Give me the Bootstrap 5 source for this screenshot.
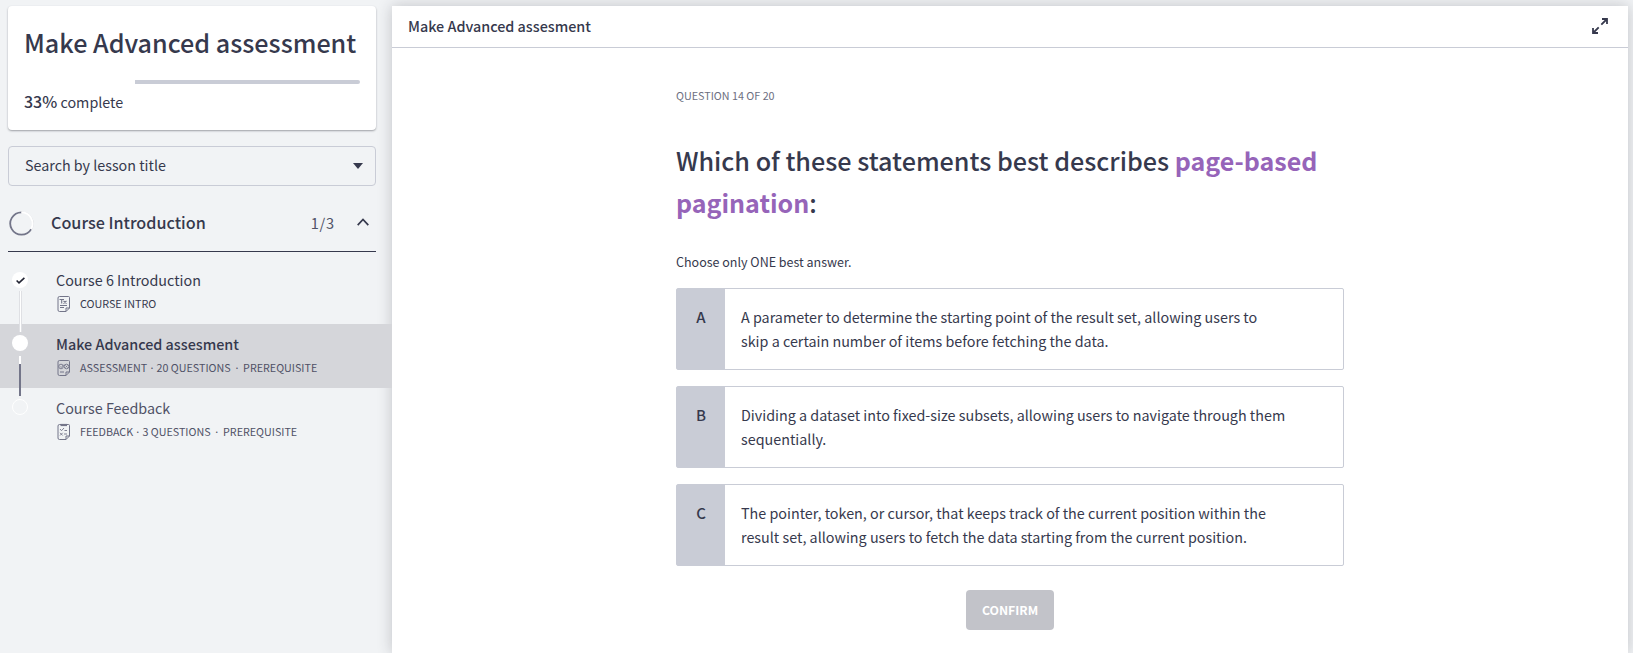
<!DOCTYPE html>
<html lang="en">
<head>
<meta charset="utf-8">
<meta name="viewport" content="width=device-width, initial-scale=1">
<title>Make Advanced assessment</title>
<link href="https://cdn.jsdelivr.net/npm/bootstrap@5.3.0/dist/css/bootstrap.min.css" rel="stylesheet">
<script src="https://cdn.jsdelivr.net/npm/bootstrap@5.3.0/dist/js/bootstrap.bundle.min.js" defer></script>
<style>
  :root { --ink: #36394d; --ink-soft: #4f5166; --line: #c9ccd6; --page: #f1f3f5; }
  body { font-family: "Noto Sans CJK JP", "Open Sans", sans-serif; font-size: 14.33px; line-height: 24px; color: var(--ink); background: var(--page); }
  .app { height: 100vh; padding-top: 6px; }

  .side { width: 392px; }
  .course-card { margin: 0 16px 0 8px; height: 124px; padding: 16px 16px 0 16px; border: 0; border-radius: 4px; box-shadow: 0 1px 2px rgba(40,42,55,.42); }
  .course-card h1 { font-size: 25.14px; line-height: 40px; font-weight: 500; margin: 0; white-space: nowrap; color: var(--ink); }
  .bar { height: 4px; margin: 18px 0 6px; background: #fff; border-radius: 2px; }
  .bar .rest { height: 4px; background: var(--line); border-radius: 0 2px 2px 0; }
  .course-card strong { font-size: 16px; line-height: 20px; font-weight: 500; }
  .search { margin: 16px 16px 0 8px; height: 40px; padding: 0 12px 2px 16px; border: 1px solid var(--line); border-radius: 4px; background: transparent; font-size: 14.3px; }
  .search svg { margin-top: 2px; }
  .section-head { margin: 12px 16px 0 8px; height: 54px; border-bottom: 1px solid var(--ink); padding: 0 7px 3px 1px; }
  .section-head h2 { font-size: 16.16px; line-height: 24px; font-weight: 500; margin: -2px 0 0 17px; }
  .section-head .tally { font-size: 14.6px; letter-spacing: .8px; color: var(--ink-soft); margin-right: 22px; }
  .section-head .chevron { margin-bottom: 2px; }
  .lessons { padding-top: 8px; }
  .lesson { position: relative; height: 64px; padding: 8px 0 0 56px; }
  .lesson.current { background: #d5d6da; }
  .lesson h3 { font-size: 14.33px; line-height: 24px; font-weight: 400; margin: 0; color: var(--ink-soft); }
  .lesson:first-child h3 { color: var(--ink); }
  .lesson.current h3 { font-size: 14.36px; font-weight: 500; color: var(--ink); }
  .meta { height: 22px; gap: 9px; font-size: 10.72px; line-height: 22px; color: var(--ink-soft); margin-top: 1px; }
  .lesson:first-child .meta { font-size: 10.76px; color: var(--ink); }
  .meta .sep { margin: 0 -.75px; }
  .meta .sep.wide { margin: 0 -1.6px; }
  .meta svg { width: 15px; height: 18px; }
  .dot { position: absolute; left: 12px; top: 11px; width: 16px; height: 16px; border-radius: 50%; background: #fff; z-index: 1; }
  .lesson:first-child .dot { top: 12px; }
  .dot.todo { border: 1px solid #fff; background: transparent; }
  .rail { position: absolute; left: 19px; top: 31px; width: 3px; height: 41px; z-index: 1; background: linear-gradient(90deg, #dfe0e4 0 1px, #fff 1px 2px, #dfe0e4 2px); }
  .rail.next { top: 32px; width: 2px; height: 40px; background: linear-gradient(#fff 0 8px, #737589 8px); }

  .stage { width: 1236px; background: #fff; box-shadow: 0 0 14px rgba(40,42,55,.24); }
  .stage-head { height: 42px; padding: 0 20px 2px 16px; border-bottom: 1px solid var(--line); font-size: 14.36px; font-weight: 500; }
  .quiz { width: 668px; margin: 0 auto; }
  .counter { font-size: 10.76px; line-height: 20px; color: #6d6f7f; margin-top: 38px; }
  .quiz h2 { font-size: 25.16px; line-height: 42px; font-weight: 500; margin: 33px 0 0; }
  .quiz h2 b { font-size: 25.03px; font-weight: 700; color: #9664b9; }
  .hint { font-size: 12.5px; line-height: 20px; margin: 29px 0 16px; }
  .option { height: 82px; border: 1px solid var(--line); border-radius: 2px; margin-bottom: 16px; }
  .option .key { width: 48px; padding-top: 16px; background: var(--line); font-weight: 500; font-size: 15px; text-align: center; }
  .option p { margin: 0; padding: 16px 20px 0 16px; flex: 1; }
  .confirm { width: 88px; height: 40px; margin-top: 8px; padding: 0; border: 0; border-radius: 4px; font-size: 12.25px; font-weight: 700; }
  .confirm:disabled { background: #c2c3c9; color: #fff; opacity: 1; }
</style>
</head>
<body class="overflow-hidden">
<div class="app d-flex">
  <aside class="side flex-shrink-0">
    <div class="course-card card">
      <h1>Make Advanced assessment</h1>
      <div class="bar d-flex justify-content-end"><div class="rest" style="width:67%"></div></div>
      <div><strong>33%</strong> complete</div>
    </div>
    <div class="search d-flex align-items-center justify-content-between">
      <span>Search by lesson title</span>
      <svg width="10" height="6" viewBox="0 0 10 6"><path d="M0 0h10L5 6z" fill="#36394d"/></svg>
    </div>
    <div class="section-head d-flex align-items-center">
      <svg width="25" height="25" viewBox="0 0 25 25" fill="none" stroke-width="1.8"><path d="M22.200 18.100A11.200 11.200 0 1 1 12.500 1.300" stroke="#737589"/><path d="M12.500 1.300A11.200 11.200 0 0 1 22.200 18.100" stroke="#d3d4da"/><path d="M12.500 1.600A10.900 10.900 0 0 1 22 18" stroke="#fff" stroke-width="2"/></svg>
      <h2>Course Introduction</h2>
      <span class="tally ms-auto">1/3</span>
      <svg class="chevron" width="12" height="8" viewBox="0 0 12 8" fill="none" stroke="#36394d" stroke-width="1.7"><path d="M.7 7.200L6 1.500l5.300 5.700"/></svg>
    </div>
    <div class="lessons">
      <div class="lesson">
        <span class="dot d-flex align-items-center justify-content-center"><svg width="9" height="7" viewBox="0 0 9 7" fill="none" stroke="#222433" stroke-width="1.6"><path d="M.6 3.500l2.400 2.300L8.400.8"/></svg></span>
        <span class="rail"></span>
        <h3>Course 6 Introduction</h3>
        <div class="meta d-flex align-items-center">
          <svg viewBox="0 0 15 18" fill="none" stroke="#737589"><path d="M3.500 1.500h9q1 0 1 1v10.500l-3.500 3.500H3.500q-1.500 0-1.500-1.500V3q0-1.500 1.500-1.500zM10 16.500V13h3.500M4 10.500h7M4 12.500h4"/><path d="M3.500 4.500h4.500M5.700 4.500v4M7.500 5.800l3 2.900M10.500 5.800l-3 2.900" stroke-width="1.100"/></svg>
          <span>COURSE INTRO</span>
        </div>
      </div>
      <div class="lesson current">
        <span class="dot"></span>
        <span class="rail next"></span>
        <h3>Make Advanced assesment</h3>
        <div class="meta d-flex align-items-center">
          <svg viewBox="0 0 15 18" fill="none" stroke="#737589"><path d="M3.500 1.500h9q1 0 1 1v10.500l-3.500 3.500H3.500q-1.500 0-1.500-1.500V3q0-1.500 1.500-1.500zM10 16.500V13h3.500M4 13h4"/><circle cx="5" cy="7.500" r="2.300" stroke-width=".9"/><circle cx="10.500" cy="7.500" r="2.300" stroke-width=".9"/><path d="M4 7.300l1.200 1.200L8 5.500M9.500 6.500l2 2M11.500 6.500l-2 2" stroke-width=".8"/></svg>
          <span>ASSESSMENT <span class="sep">·</span> 20 QUESTIONS &nbsp;<span class="sep wide">·</span> &nbsp;PREREQUISITE</span>
        </div>
      </div>
      <div class="lesson">
        <span class="dot todo"></span>
        <h3>Course Feedback</h3>
        <div class="meta d-flex align-items-center">
          <svg viewBox="0 0 15 18" fill="none" stroke="#737589"><path d="M3.500 1.500h9q1 0 1 1v10.500l-3.500 3.500H3.500q-1.500 0-1.500-1.500V3q0-1.500 1.500-1.500zM10 16.500V13h3.500"/><path d="M4 6l1.500 1.700L8 5M8.500 7.500H11M4 9.800l2.700 2.700M6.700 9.800L4 12.500M8 11h3" stroke-width=".9"/><path d="M4.500 2h6.500" stroke-width="2.200"/></svg>
          <span>FEEDBACK <span class="sep">·</span> 3 QUESTIONS &nbsp;<span class="sep wide">·</span> &nbsp;PREREQUISITE</span>
        </div>
      </div>
    </div>
  </aside>

  <main class="stage flex-shrink-0">
    <header class="stage-head d-flex align-items-center justify-content-between">
      <span>Make Advanced assesment</span>
      <svg width="16" height="16" viewBox="0 0 16 16" fill="none" stroke="#36394d" stroke-width="1.8"><path d="M10 1H15v5M15 1L9.300 6.700M6 15H1V10M1 15l5.700-5.700"/></svg>
    </header>
    <section class="quiz">
      <div class="counter">QUESTION 14 OF 20</div>
      <h2>Which of these statements best describes <b>page-based</b> <b>pagination</b>:</h2>
      <div class="hint">Choose only ONE best answer.</div>
      <div class="option d-flex"><div class="key">A</div><p>A parameter to determine the starting point of the result set, allowing users to<br>skip a certain number of items before fetching the data.</p></div>
      <div class="option d-flex"><div class="key">B</div><p>Dividing a dataset into fixed-size subsets, allowing users to navigate through them<br>sequentially.</p></div>
      <div class="option d-flex"><div class="key">C</div><p>The pointer, token, or cursor, that keeps track of the current position within the<br>result set, allowing users to fetch the data starting from the current position.</p></div>
      <div class="d-flex justify-content-center"><button class="btn confirm" disabled>CONFIRM</button></div>
    </section>
  </main>
</div>
</body>
</html>
